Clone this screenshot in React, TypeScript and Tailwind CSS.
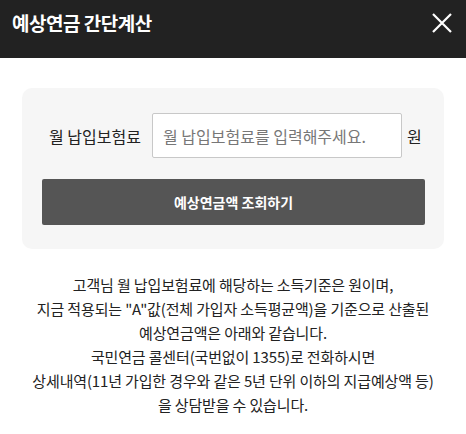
import React from "react";

export default function App() {
  const font = { fontFamily: '"Noto Sans CJK KR", "Noto Sans", sans-serif' };
  return (
    <div className="w-[466px] h-[434px] bg-white overflow-hidden" style={font}>
      <div className="h-[58px] bg-[#222222] flex items-center justify-between pl-[12px] pr-[14px]">
        <h1 className="text-white text-[19px] font-bold tracking-[-0.5px] pb-[12px]">예상연금 간단계산</h1>
        <button className="w-[20px] h-[20px] mb-[12px]" aria-label="닫기">
          <svg width="20" height="20" viewBox="0 0 20 20" fill="none" stroke="white" strokeWidth="2.2">
            <path d="M1 1L19 19M19 1L1 19" />
          </svg>
        </button>
      </div>
      <div className="px-[22px] pt-[30px]">
        <div className="bg-[#f6f6f6] rounded-[10px] pl-[20px] pr-[19px] pt-[25px] pb-[24px]">
          <div className="flex items-center">
            <span className="text-[16px] text-[#222] ml-[7px] w-[92px] whitespace-nowrap">월 납입보험료</span>
            <input
              className="ml-[11px] w-[250px] h-[45px] border border-[#c8c8c8] rounded-[2px] bg-white px-[10px] text-[16px] text-[#222] placeholder:text-[#777] outline-none"
              placeholder="월 납입보험료를 입력해주세요."
            />
            <span className="ml-[5px] text-[16px] text-[#222]">원</span>
          </div>
          <button className="mt-[21px] w-full h-[46px] bg-[#555555] rounded-[2px] text-white text-[14px] font-bold">
            예상연금액 조회하기
          </button>
        </div>
        <div className="mt-[24px] text-center text-[15px] leading-[24px] text-[#222] tracking-[-0.15px]">
          <p>고객님 월 납입보험료에 해당하는 소득기준은 원이며,</p>
          <p>지금 적용되는 "A"값(전체 가입자 소득평균액)을 기준으로 산출된</p>
          <p>예상연금액은 아래와 같습니다.</p>
          <p>국민연금 콜센터(국번없이 1355)로 전화하시면</p>
          <p>상세내역(11년 가입한 경우와 같은 5년 단위 이하의 지급예상액 등)</p>
          <p>을 상담받을 수 있습니다.</p>
        </div>
      </div>
    </div>
  );
}
